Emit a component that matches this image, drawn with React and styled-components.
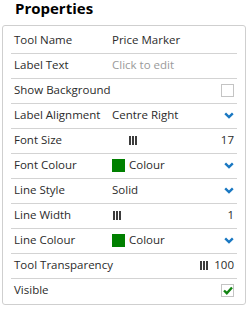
import React from 'react';
import styled, {createGlobalStyle} from "styled-components";

const GlobalStyle = createGlobalStyle`
  body {
    margin: 0;
    background: #ffffff;
    font-family: "Open Sans", "Liberation Sans", sans-serif;
  }
`

const Panel = styled.div`
  width: 250px;
  padding: 0 0 0 2px;
  box-sizing: border-box;
`

const Title = styled.div`
  font-size: 15px;
  font-weight: bold;
  color: #000;
  padding-left: 13px;
  height: 25px;
  line-height: 16px;
`

const Box = styled.div`
  width: 244px;
  box-sizing: border-box;
  border: 1px solid #cfcfcf;
  border-radius: 3px;
  padding: 3px 8px 1px 8px;
`

const Row = styled.div`
  display: grid;
  grid-template-columns: 98px 1fr auto;
  align-items: center;
  height: 24px;
  padding: 0 3px;
  font-size: 11.5px;
  line-height: 16px;
  color: #2b2b2b;
  border-bottom: ${p => p.last ? "none" : "1px solid #d3d3d3"};
`

const Label = styled.span`
  white-space: nowrap;
  margin-top: -2px;
`

const Value = styled.span`
  display: flex;
  align-items: center;
  gap: 4px;
  margin-top: -2px;
  color: ${p => p.placeholder ? "#9a9a9a" : "#2b2b2b"};
  white-space: nowrap;
`

const Right = styled.span`
  display: flex;
  align-items: center;
  gap: 10px;
  justify-content: flex-end;
  margin-top: -2px;
`

const Swatch = styled.span`
  width: 13px;
  height: 13px;
  background: #008000;
`

const Handle = styled.span`
  display: flex;
  gap: 1px;
  margin-left: ${p => p.offset}px;
  span {
    width: 2px;
    height: 9px;
    background: #3c3c3c;
  }
`

const CheckBox = styled.span`
  width: 11px;
  height: 11px;
  border: 1px solid #c4c4c4;
  background: #fff;
  display: flex;
  align-items: center;
  justify-content: center;
`

const Chevron = () => (
  <svg width="10" height="7" viewBox="0 0 10 7">
    <path d="M1.2 1.3 L5 5 L8.8 1.3" fill="none" stroke="#1a78c2" strokeWidth="2.4" />
  </svg>
)

const Grip = ({offset}) => (
  <Handle offset={offset}><span/><span/><span/></Handle>
)

const Properties = () => {
  return (
    <Panel>
      <Title>Properties</Title>
      <Box>
        <Row><Label>Tool Name</Label><Value>Price Marker</Value><Right/></Row>
        <Row><Label>Label Text</Label><Value placeholder>Click to edit</Value><Right/></Row>
        <Row><Label>Show Background</Label><Value/><Right><CheckBox/></Right></Row>
        <Row><Label>Label Alignment</Label><Value>Centre Right</Value><Right><Chevron/></Right></Row>
        <Row><Label>Font Size</Label><Value><Grip offset={17}/></Value><Right>17</Right></Row>
        <Row><Label>Font Colour</Label><Value><Swatch/>Colour</Value><Right><Chevron/></Right></Row>
        <Row><Label>Line Style</Label><Value>Solid</Value><Right><Chevron/></Right></Row>
        <Row><Label>Line Width</Label><Value><Grip offset={1}/></Value><Right>1</Right></Row>
        <Row><Label>Line Colour</Label><Value><Swatch/>Colour</Value><Right><Chevron/></Right></Row>
        <Row><Label>Tool Transparency</Label><Value><Grip offset={88}/></Value><Right>100</Right></Row>
        <Row last><Label>Visible</Label><Value/><Right>
          <CheckBox>
            <svg width="10" height="9" viewBox="0 0 10 9">
              <path d="M1 4.5 L3.8 7.2 L9 1.5" fill="none" stroke="#128412" strokeWidth="2.4" />
            </svg>
          </CheckBox>
        </Right></Row>
      </Box>
    </Panel>
  );
};

export default function App() {
  return (
    <>
      <GlobalStyle/>
      <Properties/>
    </>
  );
}
